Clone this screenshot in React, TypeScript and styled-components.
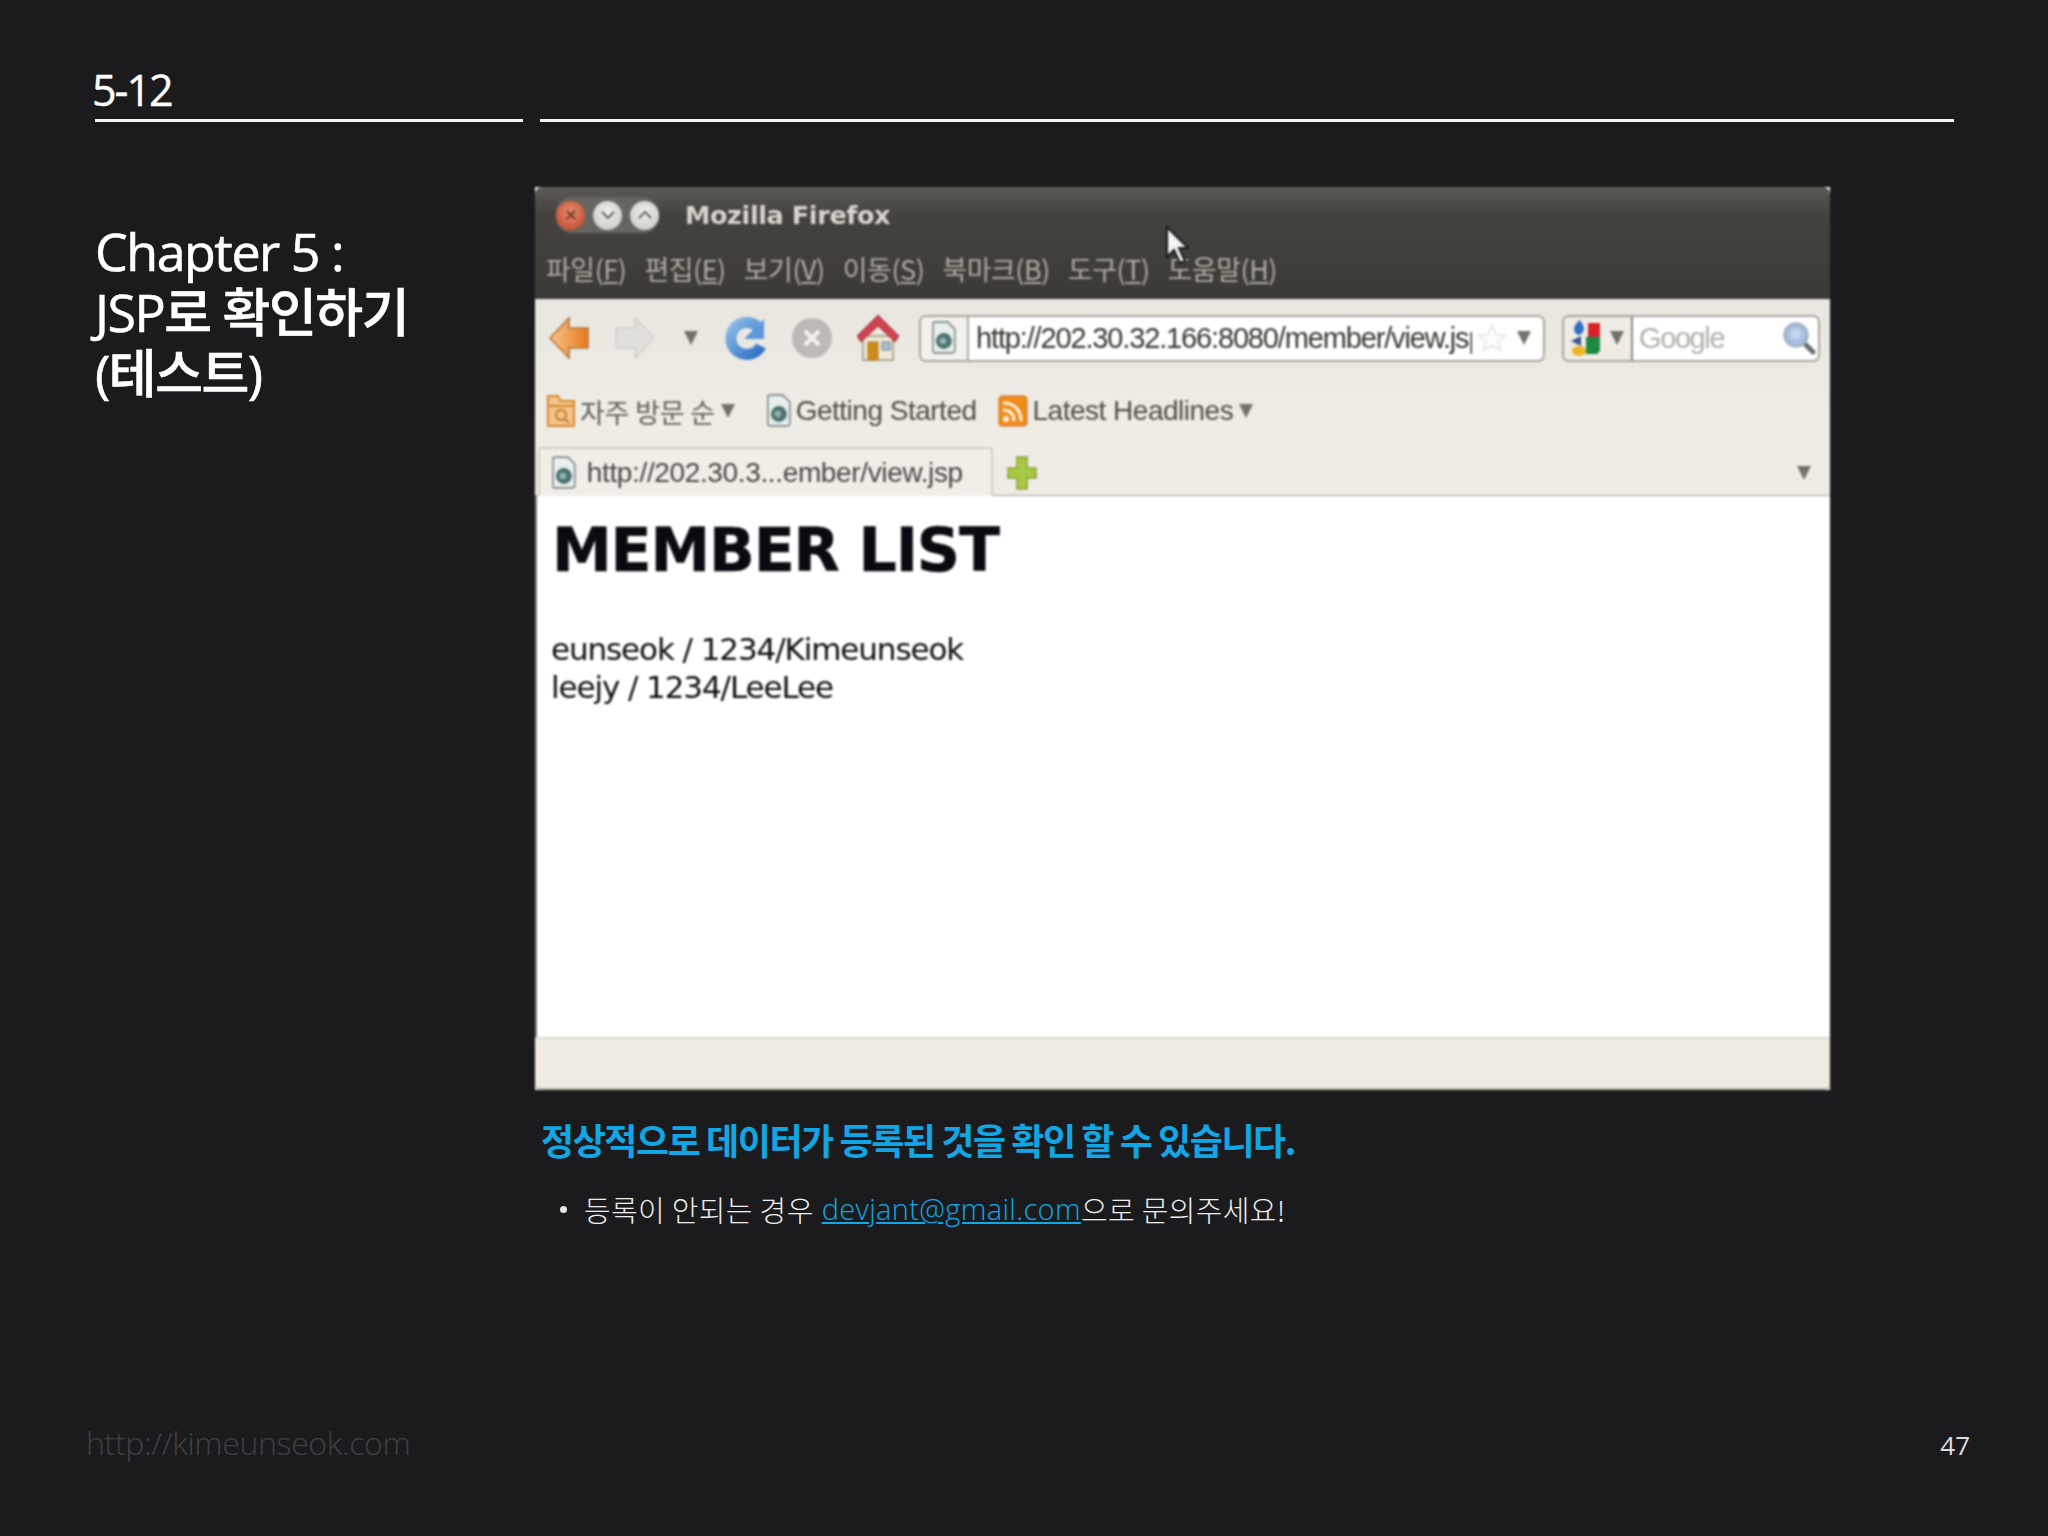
import styled, { createGlobalStyle } from 'styled-components';

const GlobalStyle = createGlobalStyle`
  html, body {
    margin: 0;
    padding: 0;
    background: #1b1b1d;
  }
`;

const KR = `"Open Sans", "Noto Sans CJK KR", sans-serif`;
const UI = `"DejaVu Sans", "Noto Sans CJK KR", sans-serif`;

const Page = styled.div`
  width: 2048px;
  height: 1536px;
  background: #1b1b1d;
  display: flex;
  flex-direction: column;
  font-family: ${KR};
  color: #fff;
  overflow: hidden;
`;

const Header = styled.header`
  display: grid;
  grid-template-columns: 428px 1414px;
  column-gap: 17px;
  padding: 60px 0 0 95px;
`;

const SectionNo = styled.div`
  height: 59px;
  border-bottom: 3px solid #f4f4f4;
  font-size: 43px;
  line-height: 59px;
  font-weight: 500;
  letter-spacing: -2px;
  text-indent: -3px;
  -webkit-text-stroke: 0.4px #fff;
`;

const HeaderRule = styled.div`
  height: 59px;
  border-bottom: 3px solid #f4f4f4;
`;

const Main = styled.main`
  display: grid;
  grid-template-columns: 440px 1295px;
  padding: 65px 0 0 95px;
`;

const Title = styled.h1`
  margin: 33px 0 0;
  font-size: 52px;
  line-height: 61px;
  font-weight: 500;
  letter-spacing: -1.5px;
  -webkit-text-stroke: 0.6px #fff;
  color: #fff;
`;

const Content = styled.div`
  display: flex;
  flex-direction: column;
`;

const Window = styled.div`
  position: relative;
  width: 1295px;
  height: 903px;
  display: flex;
  flex-direction: column;
  font-family: ${UI};
  background: #f2f2f0;
  filter: blur(0.9px);
`;

const TitleBar = styled.div`
  height: 112px;
  flex: none;
  border-radius: 7px 7px 0 0;
  background: linear-gradient(#5d5b56 0, #45433e 26px, #3c3a36 100%);
  display: flex;
  flex-direction: column;
`;

const TitleRow = styled.div`
  height: 56px;
  flex: none;
  display: flex;
  align-items: center;
  padding: 0 0 0 21px;
`;

const WindowButtons = styled.div`
  display: flex;
  align-items: center;
  gap: 8px;
  background: #67655f;
  border-radius: 16px;
  height: 36px;
`;

const WinButton = styled.span<{ $close?: boolean }>`
  width: 29px;
  height: 29px;
  border-radius: 50%;
  display: flex;
  align-items: center;
  justify-content: center;
  background: ${(p) =>
    p.$close
      ? 'radial-gradient(circle at 50% 40%, #e89070, #c8553c 70%, #9a4a38)'
      : 'radial-gradient(circle at 50% 40%, #f2f0ec, #c4c2bc)'};
`;

const WindowTitle = styled.div`
  margin-left: 26px;
  font-size: 25.5px;
  font-weight: 700;
  letter-spacing: -0.4px;
  color: #d9d6cf;
`;

const MenuBar = styled.nav`
  display: flex;
  padding: 0 0 0 11px;
  gap: 18px;
  align-items: center;
  height: 50px;
`;

const MenuItem = styled.span`
  font-family: "Noto Sans CJK KR", sans-serif;
  font-size: 27px;
  letter-spacing: -0.5px;
  color: #b0aca4;
  white-space: nowrap;

  u {
    text-underline-offset: 2px;
  }
`;

const Chrome = styled.div`
  height: 197px;
  flex: none;
  background: linear-gradient(#e9e7e0, #efebe5 60%);
  display: flex;
  flex-direction: column;
`;

const NavBar = styled.div`
  height: 76px;
  flex: none;
  box-sizing: border-box;
  display: flex;
  align-items: center;
  padding: 2px 11px 0 13px;
`;

const NavIcon = styled.svg<{ $gap?: number }>`
  flex: none;
  margin-right: ${(p) => p.$gap ?? 0}px;
`;

const DropArrow = styled.span<{ $size?: number; $gap?: number; $after?: number }>`
  flex: none;
  width: 0;
  height: 0;
  border-left: ${(p) => (p.$size ?? 14) / 2}px solid transparent;
  border-right: ${(p) => (p.$size ?? 14) / 2}px solid transparent;
  border-top: ${(p) => p.$size ?? 14}px solid #74716a;
  margin-left: ${(p) => p.$gap ?? 0}px;
  margin-right: ${(p) => p.$after ?? 0}px;
`;

const UrlBox = styled.div`
  width: 626px;
  height: 47px;
  flex: none;
  margin-left: 20px;
  box-sizing: border-box;
  border: 2px solid #aaa69c;
  border-radius: 7px;
  background: #fff;
  display: flex;
  align-items: center;
  overflow: hidden;
`;

const FavSlot = styled.div`
  width: 48px;
  height: 100%;
  flex: none;
  box-sizing: border-box;
  border-right: 2px solid #b0aca2;
  background: #f3f1ec;
  display: flex;
  align-items: center;
  justify-content: center;
`;

const UrlText = styled.div`
  width: 496px;
  margin-left: 7px;
  overflow: hidden;
  white-space: nowrap;
  flex: none;
  font-family: "Liberation Sans", sans-serif;
  font-size: 29px;
  letter-spacing: -1.15px;
  color: #3a3833;
`;

const StarSlot = styled.span`
  flex: none;
  display: flex;
  margin-left: 5px;
`;

const SearchBox = styled.div`
  width: 258px;
  height: 47px;
  flex: none;
  margin-left: 17px;
  box-sizing: border-box;
  border: 2px solid #aaa69c;
  border-radius: 7px;
  background: #fff;
  display: flex;
  align-items: center;
  overflow: hidden;
`;

const EngineSlot = styled.div`
  width: 69px;
  height: 100%;
  flex: none;
  box-sizing: border-box;
  padding-left: 6px;
  border-right: 2px solid #8e8b82;
  background: #efebe5;
  display: flex;
  align-items: center;
`;

const SearchHint = styled.div`
  flex: 1;
  padding-left: 6px;
  font-family: "Liberation Sans", sans-serif;
  font-size: 29px;
  letter-spacing: -1.4px;
  color: #b1afa9;
`;

const Bookmarks = styled.div`
  height: 72px;
  flex: none;
  display: flex;
  align-items: center;
  padding: 0 0 0 12px;
`;

const Bookmark = styled.span`
  margin-left: 5px;
  font-size: 28px;
  font-family: "Liberation Sans", sans-serif;
  letter-spacing: -0.5px;
  color: #504e48;
  white-space: nowrap;
`;

const BookmarkKr = styled(Bookmark)`
  font-family: "Noto Sans CJK KR", sans-serif;
  font-size: 27px;
  letter-spacing: -0.2px;
  color: #625f58;
`;

const Spacer = styled.span<{ $w: number }>`
  flex: none;
  width: ${(p) => p.$w}px;
`;

const TabStrip = styled.div`
  flex: 1;
  display: flex;
  align-items: flex-end;
  border-bottom: 3px solid #a19e97;
  padding: 0 0 0 3px;
`;

const Tab = styled.div`
  width: 455px;
  height: 51px;
  flex: none;
  box-sizing: border-box;
  border: 2px solid #d2cfc6;
  border-bottom: 0;
  border-radius: 4px 4px 0 0;
  background: #f1eee8;
  margin-bottom: -3px;
  padding: 0 0 2px 12px;
  display: flex;
  align-items: center;
`;

const TabLabel = styled.span`
  margin-left: 11px;
  font-family: "Liberation Sans", sans-serif;
  font-size: 28px;
  letter-spacing: -0.36px;
  color: #4a4843;
  white-space: nowrap;
`;

const TabRight = styled.div`
  flex: 1;
  height: 46px;
  box-sizing: border-box;
  display: flex;
  align-items: center;
  justify-content: space-between;
  padding: 2px 19px 0 14px;
`;

const Document = styled.div`
  flex: 1;
  box-sizing: border-box;
  background: #fff;
  padding: 16px 0 0 15px;
  border-left: 2px solid #7d7d7a;
  color: #14141a;
`;

const DocHeading = styled.h2`
  margin: 0 0 42px;
  font-size: 60px;
  line-height: 76px;
  font-weight: 700;
  color: #0a0a10;
  letter-spacing: -1.1px;
  -webkit-text-stroke: 0.6px #0a0a10;
`;

const DocLine = styled.div`
  margin-left: -1px;
  font-size: 31px;
  line-height: 38px;
  letter-spacing: -1.1px;
  color: #0e0e12;
`;

const StatusBar = styled.div`
  height: 53px;
  flex: none;
  box-sizing: border-box;
  background: #efeae3;
  border-top: 2px solid #dedbd3;
  border-bottom: 2px solid #b7b3a9;
  border-radius: 0 0 6px 6px;
`;

const Cursor = styled.svg`
  position: absolute;
  left: 630px;
  top: 38px;
`;

const Caption = styled.p`
  margin: 24px 0 0 6px;
  font-size: 36px;
  line-height: 50px;
  font-weight: 700;
  letter-spacing: -1.45px;
  font-family: "Noto Sans CJK KR", sans-serif;
  color: #12a6e4;
`;

const Notes = styled.ul`
  list-style: none;
  margin: 24px 0 0 25px;
  padding: 0;
`;

const Note = styled.li`
  display: flex;
  align-items: center;
  font-size: 29px;
  line-height: 42px;
  font-weight: 300;
  letter-spacing: 0.34px;
  font-family: "Noto Sans CJK KR", sans-serif;
  color: #eee;

  &::before {
    content: '';
    width: 7px;
    height: 7px;
    border-radius: 50%;
    background: #e8e8e8;
    margin-right: 17px;
  }
`;

const MailLink = styled.a`
  margin-left: 8px;
  color: #12a6e4;
  text-decoration: underline;
  font-family: "Open Sans", sans-serif;
  font-weight: 300;
`;

const Footer = styled.footer`
  margin-top: auto;
  display: flex;
  justify-content: space-between;
  align-items: center;
  padding: 0 78px 72px 86px;
`;

const SiteUrl = styled.span`
  font-size: 32px;
  font-weight: 300;
  letter-spacing: -0.35px;
  color: #404042;
`;

const PageNo = styled.span`
  margin-top: 5px;
  font-size: 26px;
  color: #dcdcdc;
`;

const PageIcon = ({ size = 28 }: { size?: number }) => (
  <svg width={size * 0.85} height={size * 1.18} viewBox="0 0 24 33" style={{ flex: 'none' }}>
    <path
      d="M3 1h13l7 7v21a3 3 0 0 1-3 3H3a2 2 0 0 1-2-2V3a2 2 0 0 1 2-2z"
      fill="#e9eeee"
      stroke="#7f8a88"
      strokeWidth="1.6"
    />
    <circle cx="12" cy="20" r="8" fill="#4a716e" />
    <circle cx="11" cy="20" r="3.500" fill="#8fb0ac" />
  </svg>
);

const BackIcon = () => (
  <NavIcon width="42" height="44" viewBox="0 0 42 44" $gap={24}>
    <defs>
      <linearGradient id="back" x1="0" x2="1" y1="0" y2="0">
        <stop offset="0" stopColor="#f9c48a" />
        <stop offset="1" stopColor="#e87a1d" />
      </linearGradient>
    </defs>
    <path d="M2 22 21 2v10h19v20H21v10z" fill="url(#back)" stroke="#b0793e" strokeWidth="1.6" />
  </NavIcon>
);

const ForwardIcon = () => (
  <NavIcon width="42" height="44" viewBox="0 0 42 44" $gap={28}>
    <path d="M40 22 21 2v10H2v20h19v10z" fill="#e0dfda" stroke="#d2d0c9" strokeWidth="1.4" />
  </NavIcon>
);

const ReloadIcon = () => (
  <NavIcon width="42" height="46" viewBox="0 0 42 46" $gap={24}>
    <defs>
      <linearGradient id="reload" x1="0" x2="1" y1="0" y2="1">
        <stop offset="0" stopColor="#8fbbe8" />
        <stop offset="1" stopColor="#2d71c4" />
      </linearGradient>
    </defs>
    <path d="M32 11a16 16 0 1 0 4 20" fill="none" stroke="url(#reload)" strokeWidth="11" />
    <path d="M39 4v20H19z" fill="#5e97dc" />
  </NavIcon>
);

const StopIcon = () => (
  <NavIcon width="42" height="44" viewBox="0 0 42 44" $gap={24}>
    <circle cx="21" cy="22" r="20" fill="#bdb9b6" />
    <path d="m14 15 14 14M28 15 14 29" stroke="#f4f2ee" strokeWidth="4" />
  </NavIcon>
);

const HomeIcon = () => (
  <NavIcon width="42" height="48" viewBox="0 0 42 48">
    <path d="M6 22h30v24H6z" fill="#efe8d6" stroke="#9c9680" strokeWidth="1.5" />
    <path d="M11 28h10v18H11z" fill="#d08a16" stroke="#a87a2a" />
    <path d="M25 28h8v8h-8z" fill="#a9bdd4" stroke="#75808c" />
    <path d="M21 1 0 22l4 6L21 12l17 16 4-6z" fill="#cd4450" stroke="#a83440" />
  </NavIcon>
);

const StarIcon = () => (
  <svg width="30" height="30" viewBox="0 0 30 30">
    <path
      d="m15 2 4 9 10 1-7.500 6.500L24 28l-9-5-9 5 2.500-9.500L1 12l10-1z"
      fill="#fbfbfb"
      stroke="#e6e6e2"
      strokeWidth="1.6"
    />
  </svg>
);

const GoogleIcon = () => (
  <svg width="32" height="38" viewBox="0 0 32 38" style={{ flex: 'none' }}>
    <path d="M18 4h12v14H18z" fill="#d5242b" />
    <path d="M16 18h14v14l-3 3H16z" fill="#1b8a42" />
    <path d="M9 1c4 3 5 7 5 9s-3 6-5 6-5-3-5-6 3-6 5-9z" fill="#2f6fc4" />
    <path d="M1 22l10-5v10z" fill="#33568c" />
    <ellipse cx="9" cy="32" rx="7" ry="5" fill="#eeb422" />
  </svg>
);

const SearchIcon = () => (
  <svg width="34" height="34" viewBox="0 0 34 34" style={{ flex: 'none', marginRight: 2 }}>
    <path d="m22 22 9 9" stroke="#6a6f72" strokeWidth="5" strokeLinecap="round" />
    <circle cx="14" cy="14" r="11" fill="#a8c2e6" stroke="#a3b4c8" strokeWidth="3.500" />
    <circle cx="14" cy="13" r="5" fill="#c4d6ee" />
  </svg>
);

const FolderIcon = () => (
  <svg width="28" height="32" viewBox="0 0 28 32" style={{ flex: 'none' }}>
    <path d="M1 1h10l3 5h13v25H1z" fill="#f3c38a" stroke="#d98a32" strokeWidth="2" />
    <path d="M1 11h26" stroke="#d98a32" strokeWidth="2" />
    <circle cx="14" cy="20" r="5" fill="none" stroke="#c87a2a" strokeWidth="2" />
    <path d="m18 24 4 4" stroke="#c87a2a" strokeWidth="2" />
  </svg>
);

const RssIcon = () => (
  <svg width="30" height="32" viewBox="0 0 30 32" style={{ flex: 'none' }}>
    <rect x="1" y="1" width="28" height="30" rx="3" fill="#f08b1e" stroke="#c9751c" />
    <circle cx="8" cy="24" r="3" fill="#fff2dc" />
    <path d="M5 15c7 0 11 4 11 11M5 8c11 0 18 7 18 18" fill="none" stroke="#fff2dc" strokeWidth="3" />
  </svg>
);

const PlusIcon = () => (
  <svg width="30" height="34" viewBox="0 0 30 34">
    <path d="M10 1h10v11h9v10h-9v11H10V22H1V12h9z" fill="#a9c845" stroke="#8aa336" strokeWidth="1.5" />
  </svg>
);

const CloseGlyph = () => (
  <svg width="14" height="14" viewBox="0 0 14 14">
    <path d="m3 3 8 8M11 3l-8 8" stroke="#7c3a28" strokeWidth="2.400" />
  </svg>
);

const ChevronGlyph = ({ up }: { up?: boolean }) => (
  <svg width="16" height="12" viewBox="0 0 16 12">
    <path d={up ? 'M2 9l6-6 6 6' : 'M2 3l6 6 6-6'} fill="none" stroke="#6e6c66" strokeWidth="2.200" />
  </svg>
);

const menuItems: [string, string][] = [
  ['파일', 'F'],
  ['편집', 'E'],
  ['보기', 'V'],
  ['이동', 'S'],
  ['북마크', 'B'],
  ['도구', 'T'],
  ['도움말', 'H'],
];

const App = () => (
  <Page>
    <GlobalStyle />
    <Header>
      <SectionNo>5-12</SectionNo>
      <HeaderRule />
    </Header>
    <Main>
      <Title>
        Chapter 5 :<br />
        JSP로 확인하기
        <br />
        (테스트)
      </Title>
      <Content>
        <Window>
          <TitleBar>
            <TitleRow>
              <WindowButtons>
                <WinButton $close>
                  <CloseGlyph />
                </WinButton>
                <WinButton>
                  <ChevronGlyph />
                </WinButton>
                <WinButton>
                  <ChevronGlyph up />
                </WinButton>
              </WindowButtons>
              <WindowTitle>Mozilla Firefox</WindowTitle>
            </TitleRow>
            <MenuBar>
              {menuItems.map(([label, key]) => (
                <MenuItem key={key}>
                  {label}(<u>{key}</u>)
                </MenuItem>
              ))}
            </MenuBar>
          </TitleBar>
          <Chrome>
            <NavBar>
              <BackIcon />
              <ForwardIcon />
              <DropArrow $after={27} />
              <ReloadIcon />
              <StopIcon />
              <HomeIcon />
              <UrlBox>
                <FavSlot>
                  <PageIcon />
                </FavSlot>
                <UrlText>http://202.30.32.166:8080/member/view.jsp</UrlText>
                <StarSlot>
                  <StarIcon />
                </StarSlot>
                <DropArrow $gap={10} />
              </UrlBox>
              <SearchBox>
                <EngineSlot>
                  <GoogleIcon />
                  <DropArrow $gap={8} />
                </EngineSlot>
                <SearchHint>Google</SearchHint>
                <SearchIcon />
              </SearchBox>
            </NavBar>
            <Bookmarks>
              <FolderIcon />
              <BookmarkKr>자주 방문 순</BookmarkKr>
              <DropArrow $gap={6} />
              <Spacer $w={32} />
              <PageIcon />
              <Bookmark>Getting Started</Bookmark>
              <Spacer $w={21} />
              <RssIcon />
              <Bookmark>Latest Headlines</Bookmark>
              <DropArrow $gap={6} />
            </Bookmarks>
            <TabStrip>
              <Tab>
                <PageIcon />
                <TabLabel>http://202.30.3...ember/view.jsp</TabLabel>
              </Tab>
              <TabRight>
                <PlusIcon />
                <DropArrow />
              </TabRight>
            </TabStrip>
          </Chrome>
          <Document>
            <DocHeading>MEMBER LIST</DocHeading>
            <DocLine>eunseok / 1234/Kimeunseok</DocLine>
            <DocLine>leejy / 1234/LeeLee</DocLine>
          </Document>
          <StatusBar />
          <Cursor width="24" height="42" viewBox="0 0 24 42">
            <path d="M2 2v30l7-7 6 13 5-2-6-13h9z" fill="#f4f4f4" stroke="#1a1a1a" strokeWidth="2" />
          </Cursor>
        </Window>
        <Caption>정상적으로 데이터가 등록된 것을 확인 할 수 있습니다.</Caption>
        <Notes>
          <Note>
            등록이 안되는 경우 <MailLink href="mailto:devjant@gmail.com">devjant@gmail.com</MailLink>
            으로 문의주세요!
          </Note>
        </Notes>
      </Content>
    </Main>
    <Footer>
      <SiteUrl>http://kimeunseok.com</SiteUrl>
      <PageNo>47</PageNo>
    </Footer>
  </Page>
);

export default App;
